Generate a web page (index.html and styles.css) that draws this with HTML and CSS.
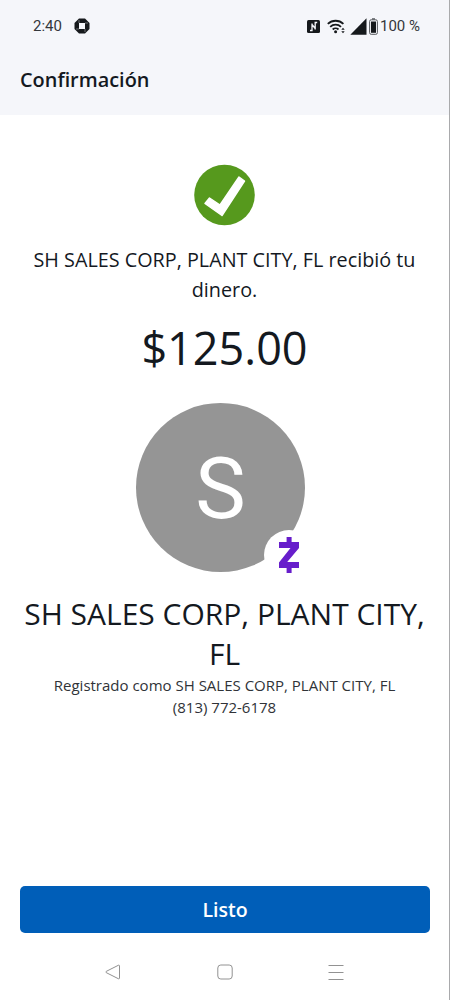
FILE: index.html
```html
<!DOCTYPE html>
<html lang="es">
<head>
    <meta charset="UTF-8">
    <meta name="viewport" content="width=device-width, initial-scale=1.0">
    <title>Confirmación</title>
    <link rel="stylesheet" href="styles.css">
</head>
<body>
<div class="screen">

    <header class="header">
        <div class="status-bar">
            <span class="time">2:40</span>
            <svg class="bank-icon" width="16" height="16" viewBox="0 0 16 16">
                <path d="M5 .5h6L15.500 5v6L11 15.500H5L.5 11V5z" fill="#16191c"/>
                <path d="M5 5h6v6H5z" fill="#f5f6fa"/>
                <path d="M5 2v3M14 5h-3M11 14v-3M2 11h3" stroke="#f5f6fa" stroke-width=".4"/>
            </svg>
            <div class="status-icons">
                <svg class="nfc-icon" width="13" height="13" viewBox="0 0 13 13">
                    <rect width="13" height="13" rx="1.500" fill="#16191c"/>
                    <path d="M3 10.500h2V3.500M5 4.500l3.200 4M8.200 9.500V2.500h2" fill="none" stroke="#f5f6fa" stroke-width="1.300"/>
                </svg>
                <svg class="wifi-icon" width="19" height="15" viewBox="0 0 19 15">
                    <g fill="none" stroke="#16191c" stroke-width="1.800">
                        <path d="M.8 4.900a11.200 11.200 0 0 1 15.600 0"/>
                        <path d="M3.200 7.800a7.700 7.700 0 0 1 10.800 0"/>
                        <path d="M5.700 10.500a4.200 4.200 0 0 1 5.800 0"/>
                    </g>
                    <circle cx="8.600" cy="12.800" r="1.500" fill="#16191c"/>
                    <path d="M14.300 10.800l1.700-2 1.700 2zM14.300 12.300h3.400l-1.700 2z" fill="#16191c"/>
                </svg>
                <svg class="signal-icon" width="17" height="17" viewBox="0 0 17 17">
                    <path d="M16.500.3v16.400H.3z" fill="#16191c"/>
                </svg>
                <svg class="battery-icon" width="9" height="17" viewBox="0 0 9 17">
                    <path d="M3 1h3" stroke="#55585c" stroke-width="1.500"/>
                    <rect x=".6" y="1.800" width="7.800" height="14.500" rx="1.600" fill="#f5f6fa" stroke="#55585c"/>
                    <rect x="2" y="3.500" width="5" height="11.300" fill="#16191c"/>
                </svg>
                <span class="battery-level">100 %</span>
            </div>
        </div>
        <h1 class="title">Confirmación</h1>
    </header>

    <main class="content">
        <svg class="check" width="61" height="62" viewBox="0 0 61 62">
            <circle cx="30.500" cy="31" r="30.300" fill="#56991d"/>
            <path d="M11 39.500l4.500-5.500 10.500 7L45 13l5.500 4L28 51.500z" fill="#fff" stroke="#fff" stroke-width="1.500" stroke-linejoin="round"/>
        </svg>

        <p class="message">SH SALES CORP, PLANT CITY, FL recibió tu<br>dinero.</p>
        <p class="amount">$125.00</p>

        <div class="avatar">
            <span class="initial">S</span>
            <div class="badge">
                <svg width="20" height="36" viewBox="0 0 20 36">
                    <path d="M7.600 0h5v5H20v6L8.200 25H20v6h-7.400v5h-5v-5H0v-5.500L11.500 11H0V5h7.600z" fill="#671dcb"/>
                </svg>
            </div>
        </div>

        <h2 class="name">SH SALES CORP, PLANT CITY,<br>FL</h2>
        <p class="details">Registrado como SH SALES CORP, PLANT CITY, FL<br>(813) 772-6178</p>
    </main>

    <button class="done-btn">Listo</button>

    <nav class="nav-bar">
        <svg width="16" height="16" viewBox="0 0 16 16">
            <path d="M13.500 1.200L1.200 7.400q-.7.600 0 1.200l12.300 6.200q1 .2 1-.8V2q0-1-1-.8z"/>
        </svg>
        <svg width="16" height="16" viewBox="0 0 16 16">
            <rect x=".8" y="1" width="14.400" height="14" rx="3"/>
        </svg>
        <svg width="16" height="16" viewBox="0 0 16 16">
            <path d="M.5 1.500h15M.5 8.500h15M.5 15.500h15"/>
        </svg>
    </nav>

</div>
</body>
</html>
```
FILE: styles.css
```css
* {
    box-sizing: border-box;
}
body {
    margin: 0;
    font-family: "Open Sans", sans-serif;
    color: #14191f;
    background-color: #fff;
}
.screen {
    display: flex;
    flex-direction: column;
    height: 1000px;
    border-right: 1px solid #a9aaac;
}
.header {
    height: 115px;
    background-color: #f5f6fa;
}
.status-bar {
    display: flex;
    align-items: center;
    height: 52px;
    padding: 0 29px 0 33px;
    font-family: Roboto, sans-serif;
    font-size: 15px;
    color: #34373b;
}
.bank-icon {
    margin-left: 12px;
}
.status-icons {
    display: flex;
    align-items: center;
    margin-left: auto;
}
.wifi-icon {
    margin-left: 7px;
}
.signal-icon {
    margin-left: 4px;
}
.battery-icon {
    margin: 0 2px 0 2px;
}
.title {
    margin: 14px 0 0 20px;
    font-size: 19.900px;
    line-height: 28px;
    font-weight: 600;
}
.content {
    display: flex;
    flex: 1;
    flex-direction: column;
    align-items: center;
    padding-top: 49px;
    text-align: center;
    white-space: nowrap;
}
.message {
    margin: 19px 0 0;
    font-size: 19.800px;
    line-height: 30px;
}
.amount {
    margin: 13px 0 0;
    font-size: 45px;
    line-height: 60px;
}
.avatar {
    position: relative;
    display: flex;
    align-items: center;
    justify-content: center;
    width: 169px;
    height: 169px;
    margin: 25px 8px 0 0;
    border-radius: 50%;
    background-color: #959595;
}
.initial {
    padding-top: 3px;
    font-family: Roboto, sans-serif;
    font-size: 85px;
    line-height: 85px;
    color: #fff;
}
.badge {
    position: absolute;
    right: -9px;
    bottom: -8px;
    display: flex;
    align-items: center;
    justify-content: center;
    width: 50px;
    height: 50px;
    border-radius: 50%;
    background-color: #fff;
}
.name {
    margin: 22px 0 0;
    font-size: 30px;
    line-height: 40px;
    font-weight: 400;
}
.details {
    margin: 1px 0 0;
    font-size: 15px;
    line-height: 21.500px;
    color: #303338;
}
.done-btn {
    height: 47px;
    margin: 0 19px 0 20px;
    border: none;
    border-radius: 5px;
    background-color: #005eb8;
    font-family: "Open Sans", sans-serif;
    font-size: 19.500px;
    font-weight: 600;
    color: #fff;
    cursor: pointer;
}
.nav-bar {
    display: flex;
    justify-content: space-between;
    height: 67px;
    padding: 31px 105px 0 105px;
}
.nav-bar svg {
    fill: none;
    stroke: #929292;
    stroke-width: 1;
}
```
